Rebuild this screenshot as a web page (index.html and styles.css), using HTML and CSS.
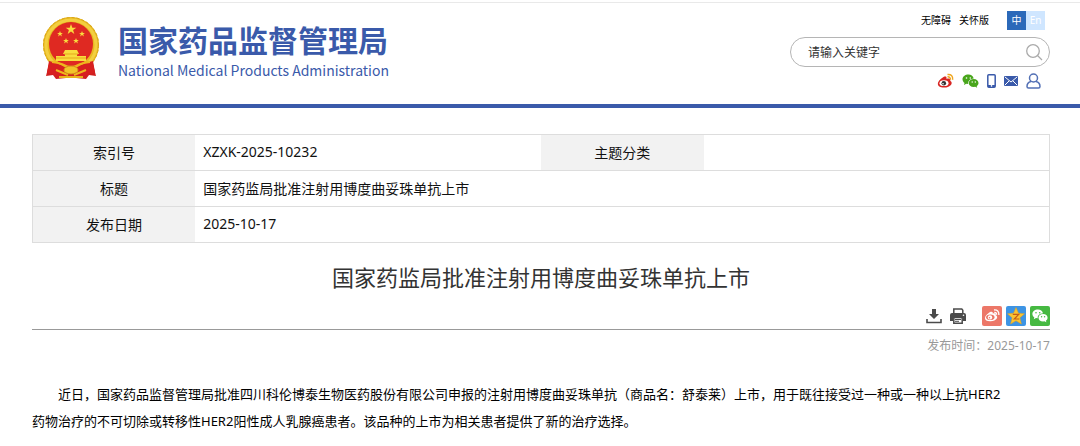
FILE: index.html
```html
<!DOCTYPE html>
<html lang="zh-CN">
<head>
<meta charset="utf-8">
<meta name="viewport" content="width=device-width, initial-scale=1">
<title>国家药监局批准注射用博度曲妥珠单抗上市</title>
<link rel="stylesheet" href="styles.css">
</head>
<body>
<header class="site-header">
  <a class="brand" href="#">
    <svg class="emblem" viewBox="0 0 58 64" aria-hidden="true">
      <path d="M7 48 4 60l7-1 3 4 10-1 5-2 5 2 10 1 3-4 7 1-3-12z" fill="#cf1f1f"/>
      <circle cx="29" cy="29" r="28" fill="#e8b920"/>
      <circle cx="29" cy="29" r="25" fill="none" stroke="#f3cf40" stroke-width="3"/>
      <circle cx="29" cy="29" r="27.500" fill="none" stroke="#d9a51a" stroke-dasharray="3 2"/>
      <circle cx="29" cy="28" r="22" fill="#df2922"/>
      <g fill="#f9dc3e">
        <path d="m29 8 1.300 3.700h4l-3.200 2.400 1.200 3.800-3.300-2.300-3.300 2.300 1.200-3.800-3.200-2.400h4z"/>
        <path id="star" d="m18 15 .8 2h2.100l-1.700 1.300.7 2.100-1.900-1.300-1.900 1.300.7-2.100-1.700-1.300h2.100z"/>
        <use href="#star" x="22"/><use href="#star" x="6" y="7"/><use href="#star" x="16" y="7"/>
        <path d="M23 34h12l2 4h-2v2h9v5H14v-5h9v-2h-2z"/>
      </g>
      <path d="M14 42h30M22 38h14" stroke="#e5a81d"/>
      <path d="M7 45q10 2 17 7l-5 9-11-3-3-2z" fill="#d72020"/>
      <path d="M51 45q-10 2-17 7l5 9 11-3 3-2z" fill="#d72020"/>
      <path d="M10 46q11 1 19 7 8-6 19-7M14 54l12 5M44 54l-12 5" fill="none" stroke="#efb61d" stroke-width="2"/>
      <ellipse cx="29" cy="54" rx="7" ry="4" fill="#f2c529" stroke="#d58d1a"/>
      <path d="M17 61h24" stroke="#e7b31b" stroke-width="2"/>
    </svg>
    <span class="brand-text">
      <span class="brand-cn">国家药品监督管理局</span>
      <span class="brand-en">National Medical Products Administration</span>
    </span>
  </a>
  <div class="tools">
    <nav class="links">
      <a href="#">无障碍</a>
      <a href="#">关怀版</a>
      <span class="lang"><a class="lang-on" href="#">中</a><a class="lang-off" href="#">En</a></span>
    </nav>
    <form class="search">
      <input type="text" placeholder="请输入关键字" aria-label="请输入关键字">
      <button type="button" aria-label="搜索">
        <svg viewBox="0 0 18 18" width="18" height="18" fill="none" stroke="#aaa" stroke-width="1.300"><circle cx="8" cy="8" r="6.300"/><path d="m12.500 12.500 4.500 4.500"/></svg>
      </button>
    </form>
    <div class="socials">
      <a href="#" aria-label="微博"><svg viewBox="0 0 17 16" width="17" height="16"><path d="M6.500 4C9 3 10 4 9.400 6c3-1 4.500 0 3.800 2 3 1 1.500 6-5.500 6.600C-1 15-1.500 8.500 6.500 4z" fill="#d82622"/><ellipse cx="7" cy="10.200" rx="4.500" ry="2.900" fill="#fff"/><circle cx="6.800" cy="10.200" r="2.300" fill="#333"/><circle cx="6" cy="10.800" r=".8" fill="#fff"/><path d="M10.500 3.800q3-.3 3 3M10.500 1.500Q16 1 15.700 6.700" fill="none" stroke="#efa51c" stroke-width="1.400"/></svg></a>
      <a href="#" aria-label="微信"><svg viewBox="0 0 17 14" width="17" height="14"><path d="M6.500.5C3 .5.500 2.600.5 5.300c0 1.500.8 2.800 2 3.600L2 11l2.300-1.200 1.900.2c-.5-3 2-5.500 5.500-5.600C11.200 2 9 .5 6.500.5z" fill="#49a61c"/><path d="M11.700 5c-2.900 0-5 1.800-5 4s2.100 4 5 4l1.500-.2 2 1-.5-1.600c1.100-.8 1.800-2 1.800-3.200 0-2.200-2-4-4.800-4z" fill="#49a61c"/><g fill="#fff"><circle cx="4.500" cy="4" r=".8"/><circle cx="8.300" cy="4" r=".8"/><circle cx="10.200" cy="8" r=".7"/><circle cx="13.300" cy="8" r=".7"/></g></svg></a>
      <a href="#" aria-label="手机"><svg viewBox="0 0 9 14" width="9" height="14"><rect x=".8" y=".8" width="7.400" height="12.400" rx="1" fill="#fff" stroke="#3a5aaa" stroke-width="1.500"/><path d="M1 11h7v2H1z" fill="#3a5aaa"/><circle cx="4.500" cy="11.900" r=".8" fill="#fff"/></svg></a>
      <a href="#" aria-label="邮箱"><svg viewBox="0 0 14 10" width="14" height="10"><rect width="14" height="10" rx="1" fill="#3a5aaa"/><path d="m1 1 6 5 6-5M1 9l4-4M13 9 9 5" fill="none" stroke="#fff"/></svg></a>
      <a href="#" aria-label="个人中心"><svg viewBox="0 0 15 16" width="15" height="16" fill="none" stroke="#5370b5" stroke-width="1.500"><circle cx="7.500" cy="5" r="4"/><path d="M5 8.500C2.500 9 1 11 1 13.500q0 1.500 1.500 1.500h10q1.500 0 1.500-1.500c0-2.500-1.500-4.500-4-5"/></svg></a>
    </div>
  </div>
</header>
<main class="content">
  <table class="meta">
    <colgroup><col class="c-label"><col class="c-value"><col class="c-label"><col class="c-value"></colgroup>
    <tr><th scope="row">索引号</th><td>XZXK-2025-10232</td><th scope="row">主题分类</th><td></td></tr>
    <tr><th scope="row">标题</th><td colspan="3">国家药监局批准注射用博度曲妥珠单抗上市</td></tr>
    <tr><th scope="row">发布日期</th><td colspan="3">2025-10-17</td></tr>
  </table>
  <h1>国家药监局批准注射用博度曲妥珠单抗上市</h1>
  <div class="actions">
    <button type="button" aria-label="下载"><svg viewBox="0 0 16 16" width="16" height="16"><path d="M6 1h4v5h3l-5 5-5-5h3z" fill="#4b4b4b"/><path d="M1 11v3.500h14V11" fill="none" stroke="#4b4b4b" stroke-width="1.600"/></svg></button>
    <button type="button" class="print" aria-label="打印"><svg viewBox="0 0 16 16" width="16" height="16"><path d="M3.800 5V1h8l1 1.200V5" fill="none" stroke="#4b4b4b" stroke-width="1.500"/><path d="M2 5h12q2 0 2 2v6h-3v-3H3v3H0V7q0-2 2-2z" fill="#4b4b4b"/><path d="M3.800 9.500h8.400v5.700H3.800z" fill="#fff" stroke="#4b4b4b" stroke-width="1.500"/><path d="M5 11.500h6M5 13.300h4" stroke="#4b4b4b"/><circle cx="13.500" cy="7.300" r=".8" fill="#fff"/></svg></button>
    <a href="#" aria-label="分享到微博"><svg viewBox="0 0 20 20" width="20" height="20"><rect width="20" height="20" rx="2" fill="#ec7768"/><path d="M8 6c2.200-.9 3.200 0 2.700 1.500 2.500-.8 3.600 0 3 1.700 3.300 1.200 1.100 5.800-5.200 6C1.500 15.400 1 10.500 8 6z" fill="#fff"/><ellipse cx="8.300" cy="11.300" rx="4.200" ry="2.800" fill="#ec7768"/><circle cx="8" cy="11.400" r="2.200" fill="#fff"/><circle cx="7.500" cy="11.800" r=".8" fill="#ec7768"/><path d="M12.300 6.500q2.500-.3 2.300 2.300M12 4q5-.5 4.900 5" fill="none" stroke="#fff" stroke-width="1.300"/></svg></a>
    <a href="#" aria-label="分享到QQ空间"><svg viewBox="0 0 20 20" width="20" height="20"><rect width="20" height="20" rx="2" fill="#3d94e4"/><path d="m10 1.500 2.500 5.700 6 .6-4.600 4 1.500 6.200-5.400-3.300L4.600 18l1.500-6.200-4.600-4 6-.6z" fill="#fbc331" stroke="#e0a11d" stroke-width=".5"/><path d="M6.800 8.300h6L8.300 13h5" fill="none" stroke="#c65d15" stroke-width="1.200"/></svg></a>
    <a href="#" aria-label="分享到微信"><svg viewBox="0 0 20 20" width="20" height="20"><rect width="20" height="20" rx="2" fill="#46b942"/><path d="M8 3.500c-3.300 0-5.600 1.900-5.600 4.400 0 1.500.8 2.600 1.900 3.400l-.5 1.900 2.200-1.100 1.700.2c-.3-2.700 2-4.900 5.300-5C12.500 5 10.500 3.500 8 3.500z" fill="#fff"/><path d="M13.100 8c-2.700 0-4.600 1.700-4.600 3.700s1.900 3.800 4.600 3.800l1.300-.2 2 1-.5-1.600c1.100-.8 1.700-1.800 1.700-3 0-2-1.900-3.700-4.500-3.700z" fill="#fff"/><g fill="#46b942"><circle cx="6" cy="6.700" r=".8"/><circle cx="9.700" cy="6.700" r=".8"/><circle cx="11.600" cy="10.700" r=".7"/><circle cx="14.600" cy="10.700" r=".7"/></g></svg></a>
  </div>
  <p class="published">发布时间：2025-10-17</p>
  <article class="article">
    <p>近日，国家药品监督管理局批准四川科伦博泰生物医药股份有限公司申报的注射用博度曲妥珠单抗（商品名：舒泰莱）上市，用于既往接受过一种或一种以上抗HER2<br>药物治疗的不可切除或转移性HER2阳性成人乳腺癌患者。该品种的上市为相关患者提供了新的治疗选择。</p>
  </article>
</main>
</body>
</html>
```
FILE: styles.css
```css
* { box-sizing: border-box; }
body {
  margin: 0;
  background: #fff;
  color: #111;
  font-family: "Noto Sans", "Noto Sans CJK SC", sans-serif;
  font-size: 14px;
}
a { color: inherit; text-decoration: none; }
button { padding: 0; border: 0; background: none; cursor: pointer; }
svg { display: block; }

.site-header {
  display: flex;
  justify-content: space-between;
  margin-top: 2px;
  padding: 8px 30px 15px 42px;
  border-top: 1px solid #e9e9e9;
  border-bottom: 4px solid #3a5aaa;
}
.brand { display: flex; align-items: flex-start; gap: 18px; padding-top: 4px; color: #3a5aaa; }
.emblem { width: 58px; height: 64px; margin-top: 1px; }
.brand-text { display: flex; flex-direction: column; padding-top: 2px; }
.brand-cn { font-family: "Noto Sans CJK SC", sans-serif; font-size: 30px; font-weight: 700; line-height: 44px; }
.brand-en { font-family: "Noto Sans CJK SC", sans-serif; font-size: 14px; line-height: 18px; }

.tools { display: flex; flex-direction: column; width: 260px; }
.links { display: flex; justify-content: flex-end; align-items: center; gap: 8px; padding-right: 5px; font-size: 10px; line-height: 19px; color: #000; }
.lang { display: flex; margin-left: 10px; color: #fff; text-align: center; }
.lang a { width: 19px; }
.lang-on { background: #2b69b9; }
.lang-off { background: #cfe6ff; }
.search { display: flex; align-items: center; height: 30px; margin-top: 7px; padding: 0 6px 0 17px; border: 1px solid #b5b5b5; border-radius: 15px; }
.search input { flex: 1; min-width: 0; padding: 0; border: 0; outline: 0; background: none; font: inherit; font-size: 12px; }
.search input::placeholder { color: #333; opacity: 1; }
.socials { display: flex; justify-content: flex-end; align-items: center; gap: 8px; margin-top: 6px; padding-right: 9px; }

.content { padding: 26px 30px 12px 32px; }
.meta { width: 100%; table-layout: fixed; border: 1px solid #ddd; border-collapse: collapse; }
.c-label { width: 16%; }
.c-value { width: 34%; }
.meta tr { height: 36px; border-bottom: 1px solid #ddd; }
.meta th { padding: 0 0 2px; background: #f2f2f2; font-weight: 400; }
.meta td { padding: 0 8px 2px; }

h1 { margin: 18px 0 0; color: #333; font-size: 22px; font-weight: 400; line-height: 32px; text-align: center; }
.actions { display: flex; justify-content: flex-end; align-items: center; gap: 4px; margin-top: 13px; padding-bottom: 3px; border-bottom: 1px solid #999; }
.actions button { margin-right: 4px; }
.actions .print { margin-right: 12px; }
.published { margin: 7px 0 0; color: #999; font-size: 12px; line-height: 18px; text-align: right; }
.article { margin-top: 26px; color: #000; font-size: 13px; line-height: 27px; }
.article p { margin: 0; text-indent: 2em; }
```
